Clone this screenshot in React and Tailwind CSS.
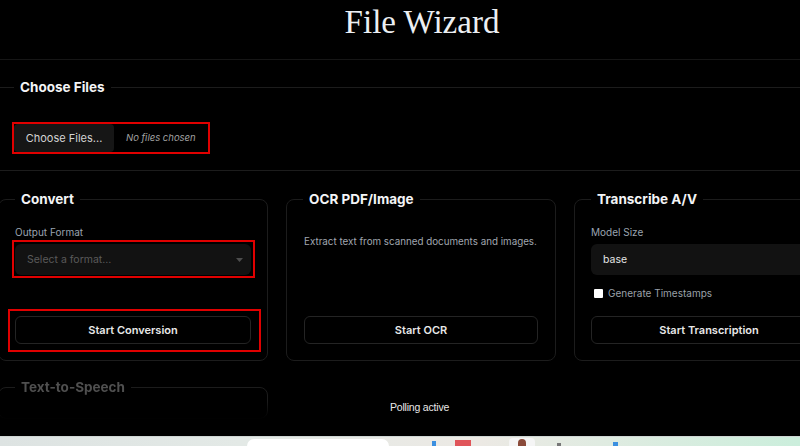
import React, { useState } from "react";

const ui = { fontFamily: "Inter, 'Noto Sans', sans-serif" };

function Card({ title, children, dim = false }) {
  return (
    <fieldset className="rounded-lg border border-[#1c1c1c] min-w-0">
      <legend
        className={`ml-[16px] px-[6px] text-[13.5px] font-bold leading-[17px] ${
          dim ? "text-[#4f4f4f]" : "text-[#f3f4f6]"
        }`}
      >
        {title}
      </legend>
      {children}
    </fieldset>
  );
}

function RedMark({ className }) {
  // annotation box drawn over the control
  return (
    <span
      className={`pointer-events-none absolute border-2 border-[#e00000] ${className}`}
    />
  );
}

function ActionButton({ children, marked = false }) {
  return (
    <div className="relative mt-auto">
      <button
        type="button"
        className="h-[28px] w-full rounded-md border border-[#242424] bg-black text-[11px] font-semibold text-[#e8e8e8]"
      >
        {children}
      </button>
      {marked && <RedMark className="-left-[7px] -right-[10px] -top-[7px] -bottom-[8px]" />}
    </div>
  );
}

function Caret() {
  return (
    <svg width="7" height="4" viewBox="0 0 7 4" className="shrink-0">
      <path d="M0 0h7L3.5 4z" fill="#4d4d4d" />
    </svg>
  );
}

export default function App() {
  const [timestamps, setTimestamps] = useState(false);

  return (
    <div className="flex h-[446px] w-[800px] flex-col overflow-hidden bg-black" style={ui}>
      <div className="relative flex-1 overflow-hidden">
        <header className="flex h-[60px] justify-center border-b border-[#161616] pt-[3px]">
          <h1
            className="pl-[44px] text-[33px] leading-[38px] text-[#eceff3]"
            style={{ fontFamily: "'Liberation Serif', 'Times New Roman', serif" }}
          >
            File Wizard
          </h1>
        </header>

        {/* Choose Files */}
        <fieldset className="mt-[19px] border-t border-b border-[#1c1c1c] pb-[16px]">
          <legend className="ml-[14px] px-[6px] text-[13.5px] font-bold leading-[17px] text-[#f3f4f6]">
            Choose Files
          </legend>
          <div className="ml-[12px] mt-[26px] flex h-[32px] w-[198px] items-center border-2 border-[#e00000]">
            <button
              type="button"
              className="h-full w-[100px] rounded-sm bg-[#161616] text-[11px] text-[#d4d4d4]"
            >
              Choose Files...
            </button>
            <span className="pl-[12px] text-[9.5px] italic text-[#a3a3a3]">No files chosen</span>
          </div>
        </fieldset>

        {/* Tool cards */}
        <div className="-ml-[2px] mt-[20px] grid w-[846px] grid-cols-3 gap-[18px]">
          <Card title="Convert">
            <div className="flex h-[152px] flex-col px-[16px] pt-[17px] pb-[16px]">
              <label className="text-[10px] leading-[14px] text-[#9aa4b0]">Output Format</label>
              <div className="relative mt-[5px]">
                <div className="flex h-[31px] items-center justify-between rounded-md bg-[#121212] pl-[12px] pr-[8px]">
                  <span className="text-[10.5px] text-[#5a5a5a]">Select a format...</span>
                  <Caret />
                </div>
                <RedMark className="-left-[3px] -right-[4px] -top-[4px] -bottom-[3px]" />
              </div>
              <ActionButton marked>Start Conversion</ActionButton>
            </div>
          </Card>

          <Card title="OCR PDF/Image">
            <div className="flex h-[152px] flex-col px-[17px] pt-[27px] pb-[16px]">
              <p className="whitespace-nowrap text-[9.8px] leading-[14px] text-[#a0a7b0]">
                Extract text from scanned documents and images.
              </p>
              <ActionButton>Start OCR</ActionButton>
            </div>
          </Card>

          <Card title="Transcribe A/V">
            <div className="flex h-[152px] flex-col px-[16px] pt-[17px] pb-[16px]">
              <label className="text-[10px] leading-[14px] text-[#9aa4b0]">Model Size</label>
              <div className="mt-[5px] flex h-[31px] items-center rounded-md bg-[#121212] pl-[12px]">
                <span className="text-[10.5px] text-[#e5e5e5]">base</span>
              </div>
              <label className="mt-[11px] flex items-center gap-[5px] pl-[3px] text-[10px] leading-[14px] text-[#9aa0a8]">
                <input
                  type="checkbox"
                  checked={timestamps}
                  onChange={(e) => setTimestamps(e.target.checked)}
                  className="h-[9px] w-[9px] appearance-none rounded-[1px] bg-white"
                />
                Generate Timestamps
              </label>
              <ActionButton>Start Transcription</ActionButton>
            </div>
          </Card>
        </div>

        {/* Text-to-Speech, fading out below */}
        <div className="-ml-[2px] mt-[18px] w-[270px] [mask-image:linear-gradient(to_bottom,black_55%,transparent_100%)]">
          <Card title="Text-to-Speech" dim>
            <div className="h-[22px]" />
          </Card>
        </div>

        <div
          className="absolute left-[390px] top-[400px] text-[10.5px] leading-[14px] tracking-[-0.2px] text-[#e8e8e8]"
          style={{ fontFamily: "'Liberation Sans', Arial, sans-serif" }}
        >
          Polling active
        </div>
      </div>

      {/* desktop taskbar edge */}
      <div className="flex h-[10px] shrink-0 items-end border-t border-[#cfd6d4] bg-[linear-gradient(90deg,#dde3e2_0%,#e3e9e6_30%,#ece9e4_60%,#cbeedc_100%)]">
        <div className="ml-[247px] h-[7px] w-[142px] rounded-t-full bg-white" />
        <div className="ml-[43px] h-[5px] w-[4px] bg-[#3b8fe0]" />
        <div className="ml-[19px] h-[6px] w-[16px] bg-[#e0555a]" />
        <div className="ml-[38px] h-[8px] w-[26px] rounded-t bg-[#f5f5f5]">
          <div className="mx-auto mt-[1px] h-[7px] w-[8px] rounded-t-full bg-[#8a4a3a]" />
        </div>
        <div className="ml-[22px] h-[3px] w-[4px] bg-[#777]" />
        <div className="ml-[52px] h-[4px] w-[5px] bg-[#3b8fe0]" />
      </div>
    </div>
  );
}
